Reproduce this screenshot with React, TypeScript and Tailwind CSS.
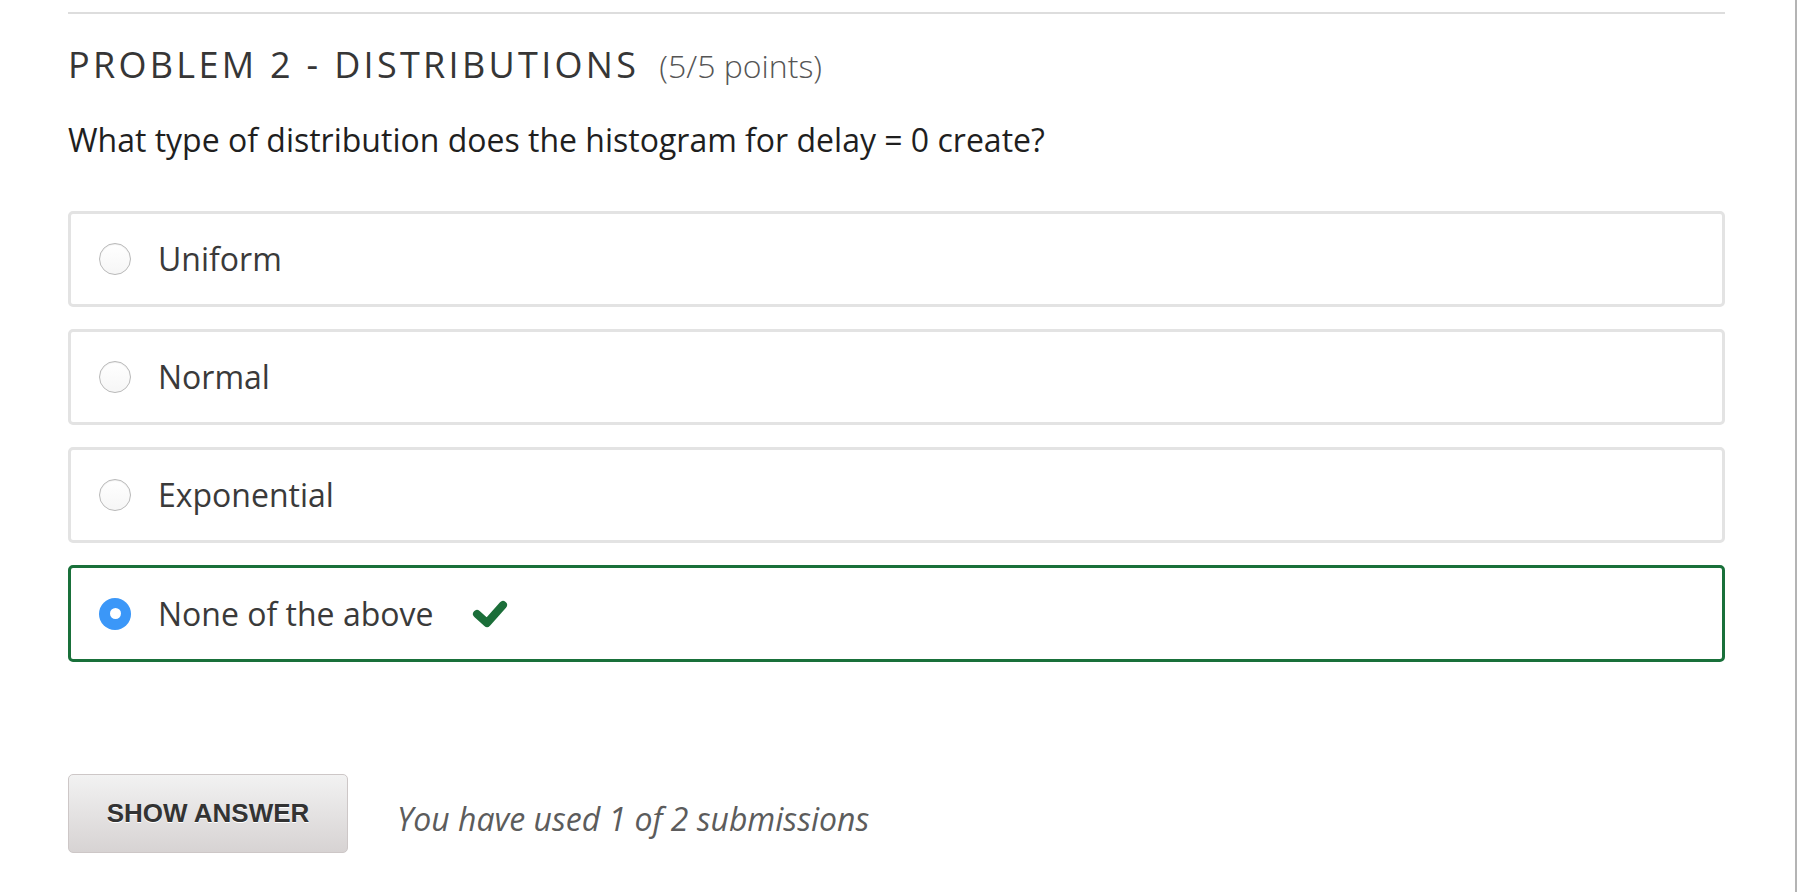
import React from "react";

const options = [
  { label: "Uniform", selected: false },
  { label: "Normal", selected: false },
  { label: "Exponential", selected: false },
  { label: "None of the above", selected: true },
];

const Radio = ({ selected }: { selected: boolean }) =>
  selected ? (
    <div className="w-[32px] h-[32px] rounded-full bg-[#3b97f8] flex items-center justify-center shrink-0">
      <div className="w-[11px] h-[11px] rounded-full bg-white" />
    </div>
  ) : (
    <div className="w-[32px] h-[32px] rounded-full border border-[#b9b9b9] bg-gradient-to-b from-white to-[#f6f6f6] shadow-[inset_0_1px_1px_rgba(0,0,0,0.06)] shrink-0" />
  );

const App = () => {
  return (
    <div className="min-h-screen w-full bg-white flex">
      <div className="w-[1797px] min-h-screen border-r-2 border-[#b4b4b4] pl-[68px] pr-[70px] pt-[12px] font-['Open_Sans',sans-serif]">
        <div className="h-[2px] bg-[#dddddd]" />

        <h2 className="mt-[29px] h-[44px] leading-[44px] text-[36px] tracking-[3.3px] text-[#363636] font-normal whitespace-nowrap">
          PROBLEM 2 - DISTRIBUTIONS
          <span className="ml-[20px] text-[32px] tracking-normal font-light text-[#555555]">
            (5/5 points)
          </span>
        </h2>

        <p className="mt-[33px] h-[40px] leading-[40px] text-[32px] text-[#1f1f1f]">
          What type of distribution does the histogram for delay = 0 create?
        </p>

        <div className="mt-[51px] flex flex-col gap-[22px]">
          {options.map((opt) => (
            <label
              key={opt.label}
              className={
                opt.selected
                  ? "h-[97px] rounded-[5px] border-[3px] border-[#19703a] flex items-center pl-[28px]"
                  : "h-[96px] rounded-[5px] border-[3px] border-[#e3e3e3] flex items-center pl-[28px]"
              }
            >
              <Radio selected={opt.selected} />
              <span className="ml-[27px] text-[32px] text-[#3a3a3a] leading-none">{opt.label}</span>
              {opt.selected && (
                <svg width="38" height="30" viewBox="0 0 38 30" className="ml-[38px]">
                  <polyline
                    points="6,15 16,24 32,6"
                    fill="none"
                    stroke="#1b6e39"
                    strokeWidth="8"
                    strokeLinecap="round"
                    strokeLinejoin="round"
                  />
                </svg>
              )}
            </label>
          ))}
        </div>

        <div className="mt-[112px] flex items-center">
          <button className="w-[280px] h-[79px] rounded-[5px] border border-[#cdc7c7] bg-gradient-to-b from-[#f2f2f2] to-[#d7d3d3] font-['Liberation_Sans',Arial,sans-serif] font-bold text-[26px] text-[#333333] [text-shadow:0_1px_0_#ffffff]">
            SHOW ANSWER
          </button>
          <span className="ml-[49px] pt-[10px] italic text-[32px] text-[#5c5c5c]">
            You have used 1 of 2 submissions
          </span>
        </div>
      </div>
    </div>
  );
};

export default App;
